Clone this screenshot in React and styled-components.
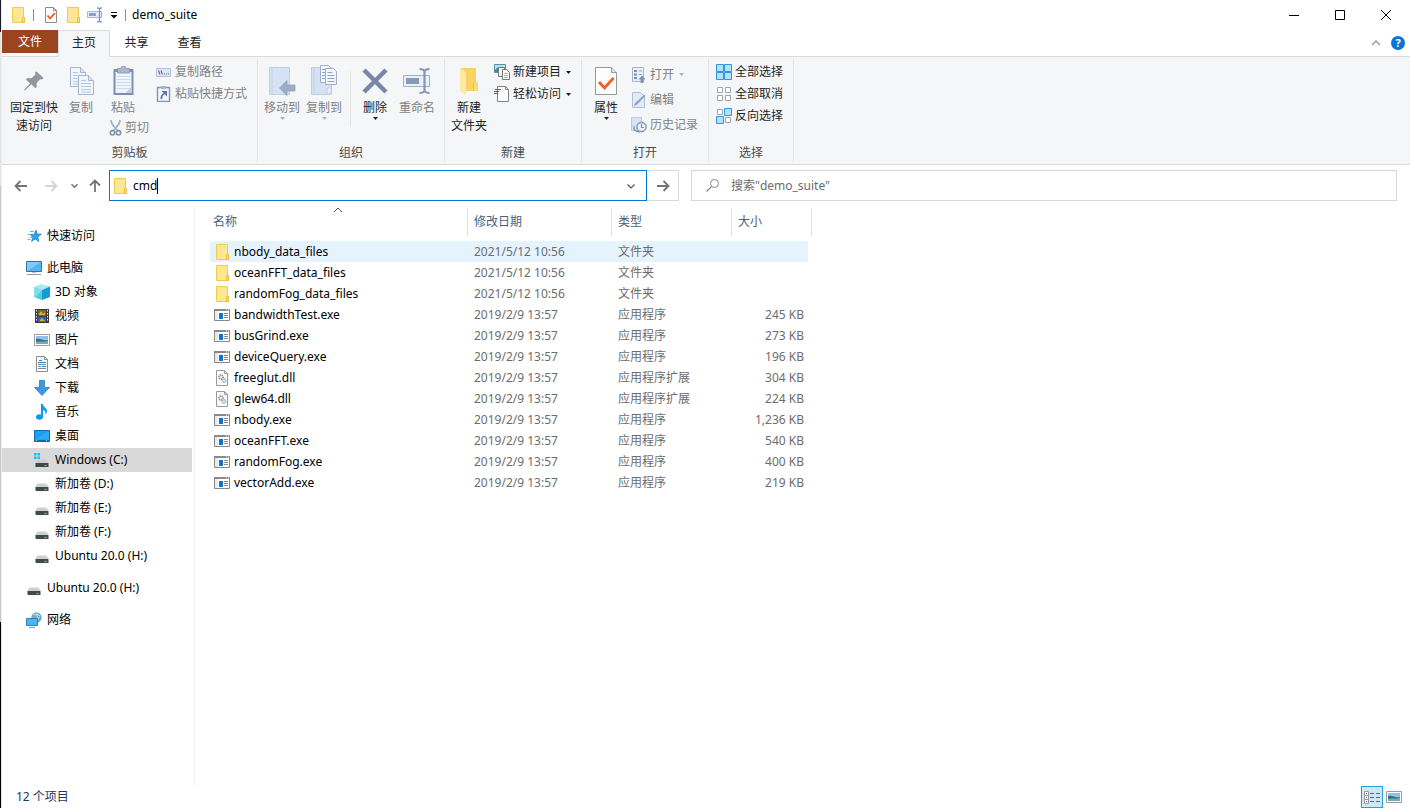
import React, { useState } from "react";
import styled, { createGlobalStyle, css } from "styled-components";

const GlobalStyle = createGlobalStyle`
  *, *::before, *::after { box-sizing: border-box; }
  body {
    margin: 0;
    background: #fff;
    color: #000;
    font: 12px/18px "Noto Sans", "Noto Sans CJK SC", sans-serif;
  }
  button, input { font: inherit; color: inherit; }
  svg { display: block; flex: none; }
`;

/* ---------- shell ---------- */

const Desktop = styled.div`
  display: flex;
  min-height: 100vh;
`;

const DesktopEdge = styled.div`
  width: 1px;
  background: linear-gradient(#1c1a2b 0 4%, #e4e4e4 4% 23%, #c9c9c9 23% 77%, #000 77%);
`;

const Window = styled.div`
  flex: 1;
  min-width: 0;
  display: flex;
  flex-direction: column;
  border-left: 1px solid #ececec;
`;

const PlainButton = styled.button`
  display: flex;
  align-items: center;
  justify-content: center;
  margin: 0;
  padding: 0;
  border: 0;
  background: transparent;
`;

/* ---------- title bar ---------- */

const TitleBar = styled.header`
  display: flex;
  align-items: center;
  height: 30px;
  padding: 0 1px 0 5px;
`;

const QuickButton = styled(PlainButton)`
  width: ${(p) => p.$width || 22}px;
  height: 22px;
`;

const TitleRule = styled.span`
  width: 1px;
  height: 12px;
  margin: 0 ${(p) => p.$gap || 4}px;
  background: #8a8a8a;
`;

const Title = styled.h1`
  flex: 1;
  margin: 0;
  font-size: 12px;
  font-weight: 400;
`;

const WindowButton = styled(PlainButton)`
  width: 46px;
  height: 30px;
`;

/* ---------- tabs ---------- */

const TabBar = styled.nav`
  display: flex;
  height: 27px;
  border-bottom: 1px solid #dadbdc;
`;

const Tab = styled(PlainButton)`
  width: 53px;
  height: 26px;
  color: #222;
  ${(p) =>
    p.$kind === "file" &&
    css`
      width: 56px;
      height: 23px;
      color: #fff;
      background: #9b4520;
    `}
  ${(p) =>
    p.$kind === "active" &&
    css`
      width: 52px;
      height: 27px;
      padding-bottom: 2px;
      border: 1px solid #dadbdc;
      border-bottom: 0;
      background: #f5f6f7;
    `}
`;

const TabTools = styled.div`
  display: flex;
  align-items: center;
  gap: 11px;
  margin-left: auto;
  padding-right: 5px;
`;

/* ---------- ribbon ---------- */

const Ribbon = styled.div`
  display: flex;
  height: 108px;
  padding-bottom: 2px;
  border-bottom: 1px solid #dadbdc;
  background: #f5f6f7;
`;

const Group = styled.section`
  display: flex;
  flex-direction: column;
  width: ${(p) => p.$width}px;
  margin-top: 2px;
  border-right: 1px solid #e2e3e4;
`;

const GroupBody = styled.div`
  display: flex;
  flex: 1;
  align-items: flex-start;
  padding-left: ${(p) => p.$inset || 0}px;
`;

const GroupLabel = styled.h2`
  margin: 0;
  font-size: 12px;
  font-weight: 400;
  text-align: center;
  color: #4b4b4b;
`;

const Column = styled.div`
  display: flex;
  flex-direction: column;
  margin-left: ${(p) => p.$gap || 0}px;
  padding-top: ${(p) => p.$top || 0}px;
`;

const LargeButton = styled(PlainButton)`
  flex-direction: column;
  justify-content: flex-start;
  width: ${(p) => p.$width || 42}px;
  padding-top: 6px;
  color: ${(p) => (p.disabled ? "#808285" : "#1e1e1e")};
`;

const LargeIcon = styled.span`
  display: flex;
  align-items: center;
  justify-content: center;
  height: 32px;
  margin-bottom: 2px;
`;

const LargeText = styled.span`
  white-space: nowrap;
`;

const SmallButton = styled(PlainButton)`
  justify-content: flex-start;
  gap: 3px;
  height: ${(p) => p.$height || 22}px;
  padding-left: ${(p) => p.$inset || 0}px;
  white-space: nowrap;
  color: ${(p) => (p.disabled ? "#808285" : "#1e1e1e")};
`;

const Divider = styled.span`
  width: 1px;
  height: 56px;
  margin: 12px 3px 0 5px;
  background: #e2e3e4;
`;

/* ---------- address row ---------- */

const AddressRow = styled.div`
  display: flex;
  height: 42px;
  padding: 5px 13px 6px 4px;
`;

const NavButton = styled(PlainButton)`
  width: ${(p) => p.$width || 30}px;
`;

const AddressBox = styled.div`
  display: flex;
  align-items: center;
  flex: 534 1 0;
  margin-left: 1px;
  padding-left: 2px;
  border: 1px solid #0078d7;
`;

const AddressInput = styled.input`
  field-sizing: content;
  margin-left: 5px;
  padding: 0;
  border: 0;
  outline: 0;
  background: transparent;
`;

const TextCaret = styled.span`
  width: 1px;
  height: 16px;
  background: #000;
`;

const DropButton = styled(PlainButton)`
  width: 30px;
  height: 29px;
  margin-left: auto;
`;

const GoButton = styled(PlainButton)`
  width: 32px;
  border: 1px solid #d9d9d9;
  border-left: 0;
`;

const SearchBox = styled.label`
  display: flex;
  align-items: center;
  flex: 691 1 0;
  gap: 10px;
  margin-left: 12px;
  padding-left: 13px;
  border: 1px solid #d9d9d9;
`;

const SearchInput = styled.input`
  flex: 1;
  padding: 0;
  border: 0;
  outline: 0;
  background: transparent;
  &::placeholder { color: #6d6d6d; opacity: 1; }
`;

/* ---------- body ---------- */

const Body = styled.div`
  display: flex;
  flex: 1;
`;

const Sidebar = styled.nav`
  width: 193px;
  padding: 17px 2px 0 0;
  border-right: 1px solid #f2f2f2;
`;

const Tree = styled.ul`
  margin: 0 0 8px;
  padding: 0;
  list-style: none;
`;

const TreeLink = styled.a`
  display: flex;
  align-items: center;
  gap: 5px;
  height: 24px;
  padding-left: ${(p) => (p.$child ? 32 : 24)}px;
  color: #000;
  text-decoration: none;
  background: ${(p) => (p.$selected ? "#d9d9d9" : "transparent")};
`;

const Content = styled.main`
  flex: 1;
  padding: 1px 0 0 15px;
`;

const FileTable = styled.table`
  width: 602px;
  table-layout: fixed;
  border-spacing: 0;
`;

const HeadCell = styled.th`
  position: relative;
  width: ${(p) => p.$width}px;
  padding: 0 0 5px;
  font-weight: 400;
  text-align: left;
  color: #4c607a;
`;

const HeadLabel = styled.div`
  height: 28px;
  padding-left: ${(p) => p.$inset || 6}px;
  line-height: 28px;
  border-right: 1px solid #e2e2e2;
`;

const SortMark = styled.span`
  position: absolute;
  top: -2px;
  left: 0;
  right: 2px;
  display: flex;
  justify-content: center;
`;

const FileRow = styled.tr`
  td { background-color: ${(p) => (p.$hot ? "#e5f3ff" : "transparent")}; }
`;

const Cell = styled.td`
  height: 21px;
  padding: 0 0 0 6px;
  line-height: 21px;
  white-space: nowrap;
  color: #6d6d6d;
`;

const NameCell = styled(Cell)`
  padding-left: 4px;
  color: #000;
`;

const NameInner = styled.div`
  display: flex;
  align-items: center;
  gap: 4px;
`;

const SizeCell = styled(Cell)`
  padding: 0 4px 0 0;
  border-right: 4px solid transparent;
  background-clip: padding-box;
  text-align: right;
`;

const StatusBar = styled.footer`
  display: flex;
  align-items: center;
  height: 22px;
  padding: 0 5px 0 14px;
  color: #1e395b;
`;

const ViewButton = styled(PlainButton)`
  width: 22px;
  height: 22px;
  border: ${(p) => (p.$on ? "1px solid #26a0da" : "0")};
  background: ${(p) => (p.$on ? "#cbe8f6" : "transparent")};
`;

const ViewButtons = styled.div`
  display: flex;
  margin-left: auto;
`;

/* ---------- icons ---------- */

const Svg = ({ w = 16, h = 16, children }) => (
  <svg width={w} height={h} viewBox={`0 0 ${w} ${h}`} fill="none" aria-hidden="true">
    {children}
  </svg>
);

const FolderIcon = () => (
  <Svg>
    <path d="M2.5.5h11v10h1v5h-12z" fill="#ffe692" stroke="#efca55" />
    <path d="M12.500 15.500v-5h2v5z" fill="#fde08a" stroke="#e9c045" />
  </Svg>
);

const CheckDocIcon = () => (
  <Svg>
    <path d="M2.5.5h8l3 3v12h-11z" fill="#fff" stroke="#8a8d90" />
    <path d="M10.500.5v3h3" stroke="#8a8d90" />
    <path d="M4.500 8.500l2.500 3L12 6" stroke="#e8591c" strokeWidth="1.800" />
  </Svg>
);

const RenameSmallIcon = () => (
  <Svg>
    <path d="M.5 4.500h14v6H.5z" fill="#e4edf8" stroke="#a9b8d0" />
    <path d="M2 6h7v3H2z" fill="#8fa2bf" />
    <path d="M12.500 1v14M10 .8c1.500 0 2 .2 2.500 1 .5-.8 1-1 2.500-1M10 15.200c1.500 0 2-.2 2.500-1 .5.800 1 1 2.500 1" stroke="#8092b0" strokeWidth="1.300" />
  </Svg>
);

const CustomizeIcon = () => (
  <Svg w={8} h={8}>
    <path d="M1 1.500h6" stroke="#000" />
    <path d="M.5 4h7L4 7.500z" fill="#000" />
  </Svg>
);

const PinIcon = () => (
  <Svg w={22} h={22}>
    <path d="M13.500 1.500l7 6.500-1.500 1.500-2-.3-3.500 4 .3 3.500-1.500 1.500-4-4L2 20.500l-1-.5 6-6.500-4-4L4.500 8l4 .2 4-3.700-.5-2z" fill="#8f989f" />
  </Svg>
);

const Sheet = ({ x, y }) => (
  <g transform={`translate(${x} ${y})`}>
    <path d="M.5.5h10l5 5v14H.5z" fill="#f1f6fc" stroke="#a6b6d2" />
    <path d="M10.500.5v5h5" fill="#d9e4f3" stroke="#a6b6d2" />
    <path d="M3 5.500h5M3 8.500h10M3 11.500h10M3 14.500h10M3 17h10" stroke="#b7c7df" />
  </g>
);

const CopyIcon = () => (
  <Svg w={26} h={30}>
    <Sheet x={2} y={1} />
    <Sheet x={10} y={9} />
  </Svg>
);

const PasteIcon = () => (
  <Svg w={22} h={30}>
    <path d="M1.500 3h20v26h-20z" fill="#7e90b2" />
    <path d="M3.500 6h16v21h-16z" fill="#eff5fc" />
    <path d="M5.500 2.500H9a2.500 2.500 0 015 0h3.500V7h-12z" fill="#a9b8cf" stroke="#8294b4" strokeWidth=".8" />
    <path d="M4.500 10.500h14M4.500 13.500h14M4.500 16.500h14M4.500 19.500h14M4.500 22.500h14" stroke="#ccdaec" />
    <path d="M19.500 21v6h-6z" fill="#c1cee2" />
  </Svg>
);

const CutIcon = () => (
  <Svg w={13} h={16}>
    <path d="M2 0c0 3 1 5 7 11M11 0c0 3-1 5-7 11" stroke="#a3afc6" strokeWidth="1.700" />
    <circle cx="3.500" cy="12.800" r="2.200" stroke="#8092b3" strokeWidth="1.600" />
    <circle cx="9.500" cy="12.800" r="2.200" stroke="#8092b3" strokeWidth="1.600" />
  </Svg>
);

const PathIcon = () => (
  <Svg>
    <path d="M.5 4.500h14v8H.5z" fill="#dbe7f6" stroke="#b4c3da" />
    <path d="M2.500 6.500l1.500 4M5 6.500l1.500 4" stroke="#5d6d8d" strokeWidth="1.100" />
    <path d="M8 10h1M10 10h1M12 10h1" stroke="#5d6d8d" />
  </Svg>
);

const ShortcutIcon = () => (
  <Svg>
    <path d="M1.500 1.500h12v14h-12z" fill="#eff5fc" stroke="#8496b6" strokeWidth="1.400" />
    <path d="M5 0h5v3H5z" fill="#a6b5cd" />
    <path d="M5.500 13c-.5-3 1-4.500 3-5.500" stroke="#64789f" strokeWidth="1.800" />
    <path d="M5.500 5H11v5.500z" fill="#64789f" />
  </Svg>
);

const Book = () => (
  <>
    <path d="M1.500 2.500h20v27h-20z" fill="#d5e2f3" stroke="#c0cee4" />
    <path d="M4 3v26" stroke="#c4d2e7" />
    <path d="M17 23h4v6h-4z" fill="#eaf1fa" stroke="#c0cee4" />
  </>
);

const MoveToIcon = () => (
  <Svg w={28} h={32}>
    <Book />
    <path d="M11.500 23l7.500-7.500V20h8v6h-8v4.500z" fill="#9dadc6" stroke="#8b9cb9" strokeWidth=".7" />
  </Svg>
);

const CopyToIcon = () => (
  <Svg w={28} h={32}>
    <Book />
    <g stroke="#a0b0cc" fill="#f3f7fc">
      <path d="M10.500.5h8l3 3v14h-11z" />
      <path d="M15.500 3.500h8l3 3v13h-11z" />
    </g>
    <path d="M12 4.500h3M12 7.500h3M12 10.500h3M12 13.500h3M17.500 7.500h5M17.500 10.500h7M17.500 13.500h7M17.500 16.500h7" stroke="#91a4c5" />
  </Svg>
);

const DeleteIcon = () => (
  <Svg w={26} h={26}>
    <path d="M2 2l22 22M24 2L2 24" stroke="#7787a5" strokeWidth="4.500" />
  </Svg>
);

const RenameIcon = () => (
  <Svg w={30} h={28}>
    <path d="M1.500 8.500h26v11h-26z" fill="#e9f1fb" stroke="#a0b0cb" />
    <path d="M4 11h13v6H4z" fill="#8799b7" />
    <path d="M22.500 3v22M17.500 2c3 0 4 .5 5 2 1-1.500 2-2 5-2M17.500 26c3 0 4-.5 5-2 1 1.500 2 2 5 2" stroke="#8496b4" strokeWidth="2.200" />
  </Svg>
);

const NewFolderIcon = () => (
  <Svg w={22} h={30}>
    <path d="M2 2h16v14h2v9H2z" fill="#f8d264" />
    <path d="M15 16h5v9h-5z" fill="#fbda78" />
    <path d="M2 2l6 4v23l-6-4z" fill="#ffe9a6" />
    <path d="M15.500 25v-8l2-1" stroke="#ecc253" />
  </Svg>
);

const NewItemIcon = () => (
  <Svg>
    <path d="M.5.5h11v8H.5z" fill="#bfe0ef" stroke="#4b92ac" />
    <path d="M1 6l3-3 3 3v2H1z" fill="#418aa7" />
    <path d="M4.500 3.500h6v9h-6z" fill="#fff" stroke="#787878" />
    <path d="M8.500 5.500h4l3 3v7h-7z" fill="#fff" stroke="#787878" />
    <path d="M10 9.500h4M10 11.500h4M10 13.500h4" stroke="#e2a08e" />
  </Svg>
);

const EasyAccessIcon = () => (
  <Svg>
    <path d="M3.500.5h8l3 3v12h-11z" fill="#fff" stroke="#808386" />
    <path d="M11.500.5v3h3" stroke="#808386" />
    <path d="M1 3.500h6M0 5.500h5M0 7.500h4" stroke="#1f6fbd" strokeWidth="1.200" />
  </Svg>
);

const PropertiesIcon = () => (
  <Svg w={24} h={30}>
    <path d="M1.500 1.500h16l5 5v22h-21z" fill="#fdfdfd" stroke="#979a9d" />
    <path d="M17.500 1.500v5h5" fill="#e3e4e5" stroke="#979a9d" />
    <path d="M5 16l5.500 6L19.500 12" stroke="#f2611d" strokeWidth="2.800" />
  </Svg>
);

const OpenIcon = () => (
  <Svg>
    <path d="M1.500.5h11v14h-11z" fill="#e8f0fa" stroke="#a7b5ce" />
    <path d="M3 3h3v2H3zM3 6.500h3v2H3zM3 10h3v2H3z" fill="#7f91b1" />
    <path d="M8 4h3M8 7.500h3" stroke="#91a2bf" />
    <path d="M7.500 12.500l3.500-4 3.500 4h-2V16h-3v-3.500z" fill="#8293b2" />
  </Svg>
);

const EditIcon = () => (
  <Svg>
    <path d="M1.500.5h8l4 4v11h-12z" fill="#e1ebf8" stroke="#b0bfd6" />
    <path d="M3 14l1-3 9.500-8.500L14.500 4 6 12.500z" fill="#90a2bf" />
  </Svg>
);

const HistoryIcon = () => (
  <Svg>
    <path d="M.5.5h10v13H.5z" fill="#d8e4f4" stroke="#bccae0" />
    <circle cx="10.500" cy="10" r="4.600" fill="#edf2f8" stroke="#8d9db7" strokeWidth="1.600" />
    <path d="M10.500 7v3.500H13M3 9c-1 4 2 6 6 6" stroke="#7e90ad" strokeWidth="1.200" />
  </Svg>
);

const SelectIcon = ({ on }) => {
  const spots = [
    [0, 0],
    [8, 0],
    [0, 8],
    [8, 8],
  ];
  return (
    <Svg>
      {spots.map(([x, y], i) =>
        on[i] ? (
          <path key={i} d={`M${x + 0.5} ${y + 0.5}h7v7h-7z`} fill="#b8e0fa" stroke="#3296dc" />
        ) : (
          <path key={i} d={`M${x + 1.5} ${y + 1.5}h5v5h-5z`} fill="#fff" stroke="#a2a5a8" />
        )
      )}
    </Svg>
  );
};

const DownMark = ({ color = "#1e1e1e" }) => (
  <Svg w={5} h={3}>
    <path d="M0 0h5L2.500 3z" fill={color} />
  </Svg>
);

const MarkSlot = styled.span`
  display: flex;
  margin-left: 2px;
`;

const ArrowIcon = ({ turn = 0, color = "#737373" }) => (
  <Svg w={14} h={14}>
    <g transform={`rotate(${turn} 7 7)`}>
      <path d="M1.500 7H13M6.500 2L1.500 7l5 5" stroke={color} strokeWidth="1.800" />
    </g>
  </Svg>
);

const Chevron = ({ up, size = 8, color = "#555", stroke = 1.2 }) => (
  <svg width={size} height={size} viewBox="0 0 8 8" fill="none" aria-hidden="true">
    <path d={up ? "M0 6l4-4 4 4" : "M.5 2.500L4 6l3.500-3.500"} stroke={color} strokeWidth={stroke} />
  </svg>
);

const SearchIcon = () => (
  <Svg>
    <circle cx="9.500" cy="5.500" r="4" stroke="#858585" />
    <path d="M6.700 8.300L1.500 13.500" stroke="#858585" strokeWidth="1.200" />
  </Svg>
);

const StarIcon = () => (
  <Svg>
    <path d="M10 2l1.200 4 4.300.2-3.700 2.600 1 4.700-3.600-2.500L5.500 13.500l1.300-4.200L4 6.500h4z" fill="#2aa3ee" stroke="#1583c9" strokeWidth=".7" />
    <path d="M4 3.500h4M2 6.500h3M4 9.500h2M1.500 11.500h3" stroke="#66b7e6" />
  </Svg>
);

const PcIcon = () => (
  <Svg>
    <path d="M.5 1.500h15v10H.5z" fill="#54b5f4" stroke="#37739b" />
    <path d="M1 2h14L1 11z" fill="#7fcbfa" />
    <path d="M6 12h4v1H6z" fill="#b7c4cd" />
    <path d="M1 14.500h14" stroke="#8b9aa5" />
  </Svg>
);

const CubeIcon = () => (
  <Svg>
    <path d="M0 3l7-3 9 2.500L8 6z" fill="#a9e9f2" />
    <path d="M0 3l8 3v10l-8-3z" fill="#4fcbdc" />
    <path d="M8 6l8-3.500V13l-8 3z" fill="#149bd0" />
    <path d="M0 3l8 3-7 7.500-1-.5z" fill="#83dde8" />
  </Svg>
);

const VideoIcon = () => (
  <Svg>
    <path d="M1 1h14v14H1z" fill="#3a3a3a" />
    <path d="M4 2h8v6H4z" fill="#6f6a2f" />
    <path d="M4 9h8v5H4z" fill="#2d67c4" />
    <path d="M5 6l2-3 2 3 2-2v3H5zM6 12l2-2 3 3H6z" fill="#e8a43c" />
    <path d="M2.500 2v12M13.500 2v12" stroke="#eee" strokeDasharray="1.500 1.500" />
  </Svg>
);

const PictureIcon = () => (
  <Svg>
    <path d="M.5 2.500h15v11H.5z" fill="#fff" stroke="#9c9c9c" />
    <path d="M2 4h12v4H2z" fill="#8cc4ee" />
    <path d="M2 7c4-1 7 2 12 1v4H2z" fill="#356f7c" />
    <path d="M2 10c4-1 8 0 12-1v3H2z" fill="#7ba7c3" />
  </Svg>
);

const DocIcon = () => (
  <Svg>
    <path d="M2.500.5h8l3 3v12h-11z" fill="#fff" stroke="#8c8c8c" />
    <path d="M10.500.5v3h3" stroke="#8c8c8c" />
    <path d="M5 4.500h3M4 6.500h8M8 10.500h4" stroke="#2e8bc9" />
    <path d="M4 8.500h8M4 10.500h3M4 12.500h8" stroke="#7e8f9a" />
  </Svg>
);

const DownloadIcon = () => (
  <Svg>
    <path d="M5.500.5h5v7h5L8 15.500.5 7.500h5z" fill="#3d97e3" stroke="#2c78bd" strokeWidth=".8" />
  </Svg>
);

const MusicIcon = () => (
  <Svg>
    <ellipse cx="5.500" cy="13" rx="3.500" ry="2.700" fill="#0c9bf2" />
    <path d="M7 0h2c0 3 4 4 4 7 0 1.500-.5 2.500-1.500 3.500.5-3-1-4-2.500-4.500v7H7z" fill="#0c9bf2" />
  </Svg>
);

const DesktopIcon = () => (
  <Svg>
    <path d="M.5 2.500h15v11H.5z" fill="#1b9ff1" stroke="#0d6db0" />
    <path d="M1 11.500L14 3h1v8.500z" fill="#37b0fa" opacity=".6" />
    <path d="M1 12.500h14" stroke="#0d6db0" />
    <path d="M2 12.500h2M12 12.500h2" stroke="#9cd6fb" strokeDasharray="1 1" />
  </Svg>
);

const DriveIcon = ({ system }) => (
  <Svg>
    {system && <path d="M0 1h2.500v2.500H0zM3.500 1H6v2.500H3.500zM0 4.500h2.500V7H0zM3.500 4.500H6V7H3.500z" fill="#19bbec" />}
    <path d="M3.500 7.500h9l2 3.500H1.500z" fill="#cdd0d3" />
    <path d="M1.500 11h13v4h-13z" fill="#44474a" />
    <path d="M10.500 13.500h2" stroke="#5ee06a" />
  </Svg>
);

const NetworkIcon = () => (
  <Svg>
    <circle cx="10.500" cy="5.500" r="5.200" fill="#74a9c8" />
    <path d="M7 2c2 2 5-1 7 2M10 8l4-3M10 .5c2 3 2 7 0 10" stroke="#cfe5f0" />
    <path d="M.5 6.500h11v7H.5z" fill="#4db3f0" stroke="#2b83bb" />
    <path d="M3 15.500h6" stroke="#8aa5b5" />
  </Svg>
);

const ExeIcon = () => (
  <Svg>
    <path d="M.5 2.500h15v11H.5z" fill="#fff" stroke="#87898b" />
    <path d="M0 2h16v2H0z" fill="#87898b" />
    <path d="M12 3h1M14 3h1" stroke="#fff" />
    <path d="M1 4h3v9H1z" fill="#e8e9ea" />
    <path d="M5 6h4v6H5z" fill="#0f74d1" />
    <path d="M10 6.500h4M10 8.500h4M10 10.500h4" stroke="#87898b" />
  </Svg>
);

const DllIcon = () => (
  <Svg>
    <path d="M2.500.5h8l3 3v12h-11z" fill="#fafafa" stroke="#97999b" />
    <path d="M10.500.5v3h3" stroke="#97999b" />
    <circle cx="7" cy="7" r="2" stroke="#8f979e" strokeWidth="1.800" strokeDasharray="1.200 .6" />
    <circle cx="10" cy="10.500" r="1.600" stroke="#93b4cf" strokeWidth="1.700" strokeDasharray="1.200 .5" />
  </Svg>
);

const DetailsIcon = () => (
  <Svg w={16} h={14}>
    <path d="M.5 1.500h4v4h-4zM.5 5.500h4v4h-4zM.5 9.500h4v4h-4z" fill="#fff" stroke="#9a9a9a" />
    <path d="M2 3.500h1" stroke="#555" />
    <path d="M2 7.500h1" stroke="#3a7ac2" />
    <path d="M2 11.500h1" stroke="#b5302a" />
    <path d="M6 3.500h4M12 3.500h4M6 7.500h4M12 7.500h4M6 11.500h4M12 11.500h4" stroke="#666" />
  </Svg>
);

const HelpBadge = styled(PlainButton)`
  width: 14px;
  height: 14px;
  border-radius: 50%;
  font-size: 11px;
  font-weight: 700;
  line-height: 14px;
  color: #fff;
  background: #0a74d4;
`;

/* ---------- data ---------- */

const fileIcons = { folder: FolderIcon, exe: ExeIcon, dll: DllIcon };
const typeNames = { folder: "文件夹", exe: "应用程序", dll: "应用程序扩展" };

const files = [
  ["nbody_data_files", "folder", ""],
  ["oceanFFT_data_files", "folder", ""],
  ["randomFog_data_files", "folder", ""],
  ["bandwidthTest.exe", "exe", "245 KB"],
  ["busGrind.exe", "exe", "273 KB"],
  ["deviceQuery.exe", "exe", "196 KB"],
  ["freeglut.dll", "dll", "304 KB"],
  ["glew64.dll", "dll", "224 KB"],
  ["nbody.exe", "exe", "1,236 KB"],
  ["oceanFFT.exe", "exe", "540 KB"],
  ["randomFog.exe", "exe", "400 KB"],
  ["vectorAdd.exe", "exe", "219 KB"],
];

const SystemDrive = () => <DriveIcon system />;

const trees = [
  [["快速访问", StarIcon]],
  [
    ["此电脑", PcIcon],
    ["3D 对象", CubeIcon],
    ["视频", VideoIcon],
    ["图片", PictureIcon],
    ["文档", DocIcon],
    ["下载", DownloadIcon],
    ["音乐", MusicIcon],
    ["桌面", DesktopIcon],
    ["Windows (C:)", SystemDrive],
    ["新加卷 (D:)", DriveIcon],
    ["新加卷 (E:)", DriveIcon],
    ["新加卷 (F:)", DriveIcon],
    ["Ubuntu 20.0 (H:)", DriveIcon],
  ],
  [["Ubuntu 20.0 (H:)", DriveIcon]],
  [["网络", NetworkIcon]],
];

/* ---------- composed parts ---------- */

const Large = ({ icon, lines, menu, disabled, width }) => (
  <LargeButton type="button" disabled={disabled} $width={width}>
    <LargeIcon>{icon}</LargeIcon>
    {lines.map((line) => (
      <LargeText key={line}>{line}</LargeText>
    ))}
    {menu && <DownMark color={disabled ? "#b0b2b4" : undefined} />}
  </LargeButton>
);

const Small = ({ icon, label, menu, disabled, height, inset }) => (
  <SmallButton type="button" disabled={disabled} $height={height} $inset={inset}>
    {icon}
    {label}
    {menu && (
      <MarkSlot>
        <DownMark color={disabled ? "#b0b2b4" : undefined} />
      </MarkSlot>
    )}
  </SmallButton>
);

export default function App() {
  const [path, setPath] = useState("cmd");
  return (
    <Desktop>
      <GlobalStyle />
      <DesktopEdge />
      <Window>
        <TitleBar>
          <QuickButton type="button" aria-label="demo_suite"><FolderIcon /></QuickButton>
          <TitleRule />
          <QuickButton type="button" aria-label="属性" $width={26}><CheckDocIcon /></QuickButton>
          <QuickButton type="button" aria-label="新建文件夹" $width={18}><FolderIcon /></QuickButton>
          <QuickButton type="button" aria-label="重命名" $width={26}><RenameSmallIcon /></QuickButton>
          <QuickButton type="button" aria-label="自定义" $width={11}><CustomizeIcon /></QuickButton>
          <TitleRule $gap={6} />
          <Title>demo_suite</Title>
          <WindowButton type="button" aria-label="最小化">
            <Svg w={10} h={10}><path d="M0 5.500h10" stroke="#000" /></Svg>
          </WindowButton>
          <WindowButton type="button" aria-label="最大化">
            <Svg w={10} h={10}><path d="M.5.5h9v9h-9z" stroke="#000" /></Svg>
          </WindowButton>
          <WindowButton type="button" aria-label="关闭">
            <Svg w={10} h={10}><path d="M0 0l10 10M10 0L0 10" stroke="#000" /></Svg>
          </WindowButton>
        </TitleBar>

        <TabBar>
          <Tab type="button" $kind="file">文件</Tab>
          <Tab type="button" $kind="active">主页</Tab>
          <Tab type="button">共享</Tab>
          <Tab type="button">查看</Tab>
          <TabTools>
            <PlainButton type="button" aria-label="折叠功能区"><Chevron up color="#9a9a9a" stroke={1.5} /></PlainButton>
            <HelpBadge type="button" aria-label="帮助">?</HelpBadge>
          </TabTools>
        </TabBar>

        <Ribbon>
          <Group $width={256}>
            <GroupBody>
              <Large width={64} icon={<PinIcon />} lines={["固定到快", "速访问"]} />
              <Large width={30} disabled icon={<CopyIcon />} lines={["复制"]} />
              <Column $gap={6}>
                <Large disabled icon={<PasteIcon />} lines={["粘贴"]} />
                <Small inset={7} disabled icon={<CutIcon />} label="剪切" />
              </Column>
              <Column $gap={7} $top={2}>
                <Small disabled icon={<PathIcon />} label="复制路径" />
                <Small disabled icon={<ShortcutIcon />} label="粘贴快捷方式" />
              </Column>
            </GroupBody>
            <GroupLabel>剪贴板</GroupLabel>
          </Group>

          <Group $width={187}>
            <GroupBody $inset={3}>
              <Large disabled menu icon={<MoveToIcon />} lines={["移动到"]} />
              <Large disabled menu icon={<CopyToIcon />} lines={["复制到"]} />
              <Divider />
              <Large menu icon={<DeleteIcon />} lines={["删除"]} />
              <Large disabled icon={<RenameIcon />} lines={["重命名"]} />
            </GroupBody>
            <GroupLabel>组织</GroupLabel>
          </Group>

          <Group $width={137}>
            <GroupBody $inset={3}>
              <Large icon={<NewFolderIcon />} lines={["新建", "文件夹"]} />
              <Column $gap={4} $top={2}>
                <Small menu icon={<NewItemIcon />} label="新建项目" />
                <Small menu icon={<EasyAccessIcon />} label="轻松访问" />
              </Column>
            </GroupBody>
            <GroupLabel>新建</GroupLabel>
          </Group>

          <Group $width={127}>
            <GroupBody $inset={3}>
              <Large menu icon={<PropertiesIcon />} lines={["属性"]} />
              <Column $gap={4} $top={3}>
                <Small height={25} disabled menu icon={<OpenIcon />} label="打开" />
                <Small height={25} disabled icon={<EditIcon />} label="编辑" />
                <Small height={25} disabled icon={<HistoryIcon />} label="历史记录" />
              </Column>
            </GroupBody>
            <GroupLabel>打开</GroupLabel>
          </Group>

          <Group $width={85}>
            <GroupBody $inset={7}>
              <Column $top={2}>
                <Small icon={<SelectIcon on={[1, 1, 1, 1]} />} label="全部选择" />
                <Small icon={<SelectIcon on={[0, 0, 0, 0]} />} label="全部取消" />
                <Small icon={<SelectIcon on={[0, 1, 1, 0]} />} label="反向选择" />
              </Column>
            </GroupBody>
            <GroupLabel>选择</GroupLabel>
          </Group>
        </Ribbon>

        <AddressRow>
          <NavButton type="button" aria-label="后退"><ArrowIcon /></NavButton>
          <NavButton type="button" aria-label="前进" disabled><ArrowIcon turn={180} color="#d4d4d4" /></NavButton>
          <NavButton type="button" aria-label="最近浏览的位置" $width={16}><Chevron size={7} color="#737373" stroke={1.8} /></NavButton>
          <NavButton type="button" aria-label="上一级" $width={26}><ArrowIcon turn={90} /></NavButton>
          <AddressBox>
            <FolderIcon />
            <AddressInput aria-label="地址" value={path} onChange={(e) => setPath(e.target.value)} />
            <TextCaret />
            <DropButton type="button" aria-label="以前的位置"><Chevron /></DropButton>
          </AddressBox>
          <GoButton type="button" aria-label="转到"><ArrowIcon turn={180} /></GoButton>
          <SearchBox>
            <SearchIcon />
            <SearchInput type="text" aria-label="搜索" placeholder={'搜索"demo_suite"'} />
          </SearchBox>
        </AddressRow>

        <Body>
          <Sidebar>
            {trees.map((items, t) => (
              <Tree key={t}>
                {items.map(([label, Icon], i) => (
                  <li key={label}>
                    <TreeLink href="#" $child={i > 0} $selected={label === "Windows (C:)"}>
                      <Icon />
                      {label}
                    </TreeLink>
                  </li>
                ))}
              </Tree>
            ))}
          </Sidebar>
          <Content>
            <FileTable>
              <thead>
                <tr>
                  <HeadCell $width={258}>
                    <HeadLabel $inset={3}>名称</HeadLabel>
                    <SortMark><Chevron up size={8} stroke={1} /></SortMark>
                  </HeadCell>
                  <HeadCell $width={144}><HeadLabel>修改日期</HeadLabel></HeadCell>
                  <HeadCell $width={120}><HeadLabel>类型</HeadLabel></HeadCell>
                  <HeadCell $width={80}><HeadLabel>大小</HeadLabel></HeadCell>
                </tr>
              </thead>
              <tbody>
                {files.map(([name, kind, size], i) => {
                  const Icon = fileIcons[kind];
                  return (
                    <FileRow key={name} $hot={i === 0}>
                      <NameCell><NameInner><Icon />{name}</NameInner></NameCell>
                      <Cell>{kind === "folder" ? "2021/5/12 10:56" : "2019/2/9 13:57"}</Cell>
                      <Cell>{typeNames[kind]}</Cell>
                      <SizeCell>{size}</SizeCell>
                    </FileRow>
                  );
                })}
              </tbody>
            </FileTable>
          </Content>
        </Body>

        <StatusBar>
          {files.length} 个项目
          <ViewButtons>
            <ViewButton type="button" aria-label="详细信息" $on><DetailsIcon /></ViewButton>
            <ViewButton type="button" aria-label="大图标"><PictureIcon /></ViewButton>
          </ViewButtons>
        </StatusBar>
      </Window>
    </Desktop>
  );
}
